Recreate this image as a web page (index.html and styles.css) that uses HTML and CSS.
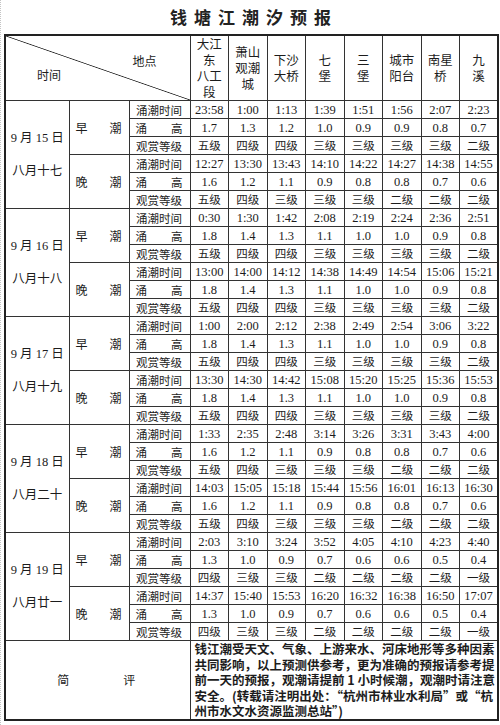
FILE: index.html
```html
<!DOCTYPE html>
<html lang="zh-CN">
<head>
<meta charset="utf-8">
<title>钱塘江潮汐预报</title>
<link rel="stylesheet" href="styles.css">
</head>
<body>
<div class="page">
<h1 class="title">钱塘江潮汐预报</h1>
<table class="tide">
<colgroup>
<col class="c-date"><col class="c-tide"><col class="c-item">
<col class="c-site" span="8">
</colgroup>
<tbody>
<tr class="head">
<td colspan="3" class="corner"><div class="corner-in"><span class="place">地点</span><span class="time">时间</span></div></td>
<td class="site">大江<br>东<br>八工<br>段</td>
<td class="site">萧山<br>观潮<br>城</td>
<td class="site">下沙<br>大桥</td>
<td class="site">七<br>堡</td>
<td class="site">三<br>堡</td>
<td class="site">城市<br>阳台</td>
<td class="site">南星<br>桥</td>
<td class="site">九<br>溪</td>
</tr>

<!-- 9月15日 -->
<tr>
<td rowspan="6" class="date"><div>9 月 15 日</div><div>八月十七</div></td>
<td rowspan="3" class="tname">早<span class="gap">潮</span></td>
<td class="item">涌潮时间</td>
<td>23:58</td><td>1:00</td><td>1:13</td><td>1:39</td><td>1:51</td><td>1:56</td><td>2:07</td><td>2:23</td>
</tr>
<tr><td class="item">涌<span class="gap">高</span></td>
<td>1.7</td><td>1.3</td><td>1.2</td><td>1.0</td><td>0.9</td><td>0.9</td><td>0.8</td><td>0.7</td></tr>
<tr class="grade"><td class="item">观赏等级</td>
<td>五级</td><td>四级</td><td>四级</td><td>三级</td><td>三级</td><td>三级</td><td>三级</td><td>二级</td></tr>
<tr>
<td rowspan="3" class="tname">晚<span class="gap">潮</span></td>
<td class="item">涌潮时间</td>
<td>12:27</td><td>13:30</td><td>13:43</td><td>14:10</td><td>14:22</td><td>14:27</td><td>14:38</td><td>14:55</td>
</tr>
<tr><td class="item">涌<span class="gap">高</span></td>
<td>1.6</td><td>1.2</td><td>1.1</td><td>0.9</td><td>0.8</td><td>0.8</td><td>0.7</td><td>0.6</td></tr>
<tr class="grade"><td class="item">观赏等级</td>
<td>五级</td><td>四级</td><td>三级</td><td>三级</td><td>三级</td><td>二级</td><td>二级</td><td>二级</td></tr>

<!-- 9月16日 -->
<tr>
<td rowspan="6" class="date"><div>9 月 16 日</div><div>八月十八</div></td>
<td rowspan="3" class="tname">早<span class="gap">潮</span></td>
<td class="item">涌潮时间</td>
<td>0:30</td><td>1:30</td><td>1:42</td><td>2:08</td><td>2:19</td><td>2:24</td><td>2:36</td><td>2:51</td>
</tr>
<tr><td class="item">涌<span class="gap">高</span></td>
<td>1.8</td><td>1.4</td><td>1.3</td><td>1.1</td><td>1.0</td><td>1.0</td><td>0.9</td><td>0.8</td></tr>
<tr class="grade"><td class="item">观赏等级</td>
<td>五级</td><td>四级</td><td>四级</td><td>三级</td><td>三级</td><td>三级</td><td>三级</td><td>二级</td></tr>
<tr>
<td rowspan="3" class="tname">晚<span class="gap">潮</span></td>
<td class="item">涌潮时间</td>
<td>13:00</td><td>14:00</td><td>14:12</td><td>14:38</td><td>14:49</td><td>14:54</td><td>15:06</td><td>15:21</td>
</tr>
<tr><td class="item">涌<span class="gap">高</span></td>
<td>1.8</td><td>1.4</td><td>1.3</td><td>1.1</td><td>1.0</td><td>1.0</td><td>0.9</td><td>0.8</td></tr>
<tr class="grade"><td class="item">观赏等级</td>
<td>五级</td><td>四级</td><td>四级</td><td>三级</td><td>三级</td><td>三级</td><td>三级</td><td>二级</td></tr>

<!-- 9月17日 -->
<tr>
<td rowspan="6" class="date"><div>9 月 17 日</div><div>八月十九</div></td>
<td rowspan="3" class="tname">早<span class="gap">潮</span></td>
<td class="item">涌潮时间</td>
<td>1:00</td><td>2:00</td><td>2:12</td><td>2:38</td><td>2:49</td><td>2:54</td><td>3:06</td><td>3:22</td>
</tr>
<tr><td class="item">涌<span class="gap">高</span></td>
<td>1.8</td><td>1.4</td><td>1.3</td><td>1.1</td><td>1.0</td><td>1.0</td><td>0.9</td><td>0.8</td></tr>
<tr class="grade"><td class="item">观赏等级</td>
<td>五级</td><td>四级</td><td>四级</td><td>三级</td><td>三级</td><td>三级</td><td>三级</td><td>二级</td></tr>
<tr>
<td rowspan="3" class="tname">晚<span class="gap">潮</span></td>
<td class="item">涌潮时间</td>
<td>13:30</td><td>14:30</td><td>14:42</td><td>15:08</td><td>15:20</td><td>15:25</td><td>15:36</td><td>15:53</td>
</tr>
<tr><td class="item">涌<span class="gap">高</span></td>
<td>1.8</td><td>1.4</td><td>1.3</td><td>1.1</td><td>1.0</td><td>1.0</td><td>0.9</td><td>0.8</td></tr>
<tr class="grade"><td class="item">观赏等级</td>
<td>五级</td><td>四级</td><td>四级</td><td>三级</td><td>三级</td><td>三级</td><td>三级</td><td>二级</td></tr>

<!-- 9月18日 -->
<tr>
<td rowspan="6" class="date"><div>9 月 18 日</div><div>八月二十</div></td>
<td rowspan="3" class="tname">早<span class="gap">潮</span></td>
<td class="item">涌潮时间</td>
<td>1:33</td><td>2:35</td><td>2:48</td><td>3:14</td><td>3:26</td><td>3:31</td><td>3:43</td><td>4:00</td>
</tr>
<tr><td class="item">涌<span class="gap">高</span></td>
<td>1.6</td><td>1.2</td><td>1.1</td><td>0.9</td><td>0.8</td><td>0.8</td><td>0.7</td><td>0.6</td></tr>
<tr class="grade"><td class="item">观赏等级</td>
<td>五级</td><td>四级</td><td>三级</td><td>三级</td><td>三级</td><td>二级</td><td>二级</td><td>二级</td></tr>
<tr>
<td rowspan="3" class="tname">晚<span class="gap">潮</span></td>
<td class="item">涌潮时间</td>
<td>14:03</td><td>15:05</td><td>15:18</td><td>15:44</td><td>15:56</td><td>16:01</td><td>16:13</td><td>16:30</td>
</tr>
<tr><td class="item">涌<span class="gap">高</span></td>
<td>1.6</td><td>1.2</td><td>1.1</td><td>0.9</td><td>0.8</td><td>0.8</td><td>0.7</td><td>0.6</td></tr>
<tr class="grade"><td class="item">观赏等级</td>
<td>五级</td><td>四级</td><td>三级</td><td>三级</td><td>三级</td><td>二级</td><td>二级</td><td>二级</td></tr>

<!-- 9月19日 -->
<tr>
<td rowspan="6" class="date"><div>9 月 19 日</div><div>八月廿一</div></td>
<td rowspan="3" class="tname">早<span class="gap">潮</span></td>
<td class="item">涌潮时间</td>
<td>2:03</td><td>3:10</td><td>3:24</td><td>3:52</td><td>4:05</td><td>4:10</td><td>4:23</td><td>4:40</td>
</tr>
<tr><td class="item">涌<span class="gap">高</span></td>
<td>1.3</td><td>1.0</td><td>0.9</td><td>0.7</td><td>0.6</td><td>0.6</td><td>0.5</td><td>0.4</td></tr>
<tr class="grade"><td class="item">观赏等级</td>
<td>四级</td><td>三级</td><td>三级</td><td>二级</td><td>二级</td><td>二级</td><td>二级</td><td>一级</td></tr>
<tr>
<td rowspan="3" class="tname">晚<span class="gap">潮</span></td>
<td class="item">涌潮时间</td>
<td>14:37</td><td>15:40</td><td>15:53</td><td>16:20</td><td>16:32</td><td>16:38</td><td>16:50</td><td>17:07</td>
</tr>
<tr><td class="item">涌<span class="gap">高</span></td>
<td>1.3</td><td>1.0</td><td>0.9</td><td>0.7</td><td>0.6</td><td>0.6</td><td>0.5</td><td>0.4</td></tr>
<tr class="grade"><td class="item">观赏等级</td>
<td>四级</td><td>三级</td><td>三级</td><td>二级</td><td>二级</td><td>二级</td><td>二级</td><td>一级</td></tr>

<tr class="note-row">
<td colspan="3" class="review">简<span class="gap">评</span></td>
<td colspan="8" class="note">钱江潮受天文、气象、上游来水、河床地形等多种因素<br>共同影响，以上预测供参考，更为准确的预报请参考提<br>前一天的预报，观潮请提前 1 小时候潮，观潮时请注意<br>安全。(转载请注明出处：“杭州市林业水利局”或“杭<br>州市水文水资源监测总站”)</td>
</tr>
</tbody>
</table>
</div>
</body>
</html>
```

FILE: styles.css
```css
html, body {
  margin: 0;
  background: #fff;
}

body {
  font-family: "Liberation Serif", "Noto Sans CJK SC", serif;
  color: #1c1c1c;
}

.page {
  width: 500px;
  height: 725px;
  box-sizing: border-box;
  border-left: 1px dotted #c4c4c4;
  padding-left: 3px;
  overflow: hidden;
}

.title {
  margin: 0;
  width: 493px;
  height: 34px;
  box-sizing: border-box;
  padding-left: 7px;
  line-height: 33px;
  text-align: center;
  font-family: "Noto Sans CJK SC", sans-serif;
  font-size: 17px;
  font-weight: 700;
  letter-spacing: 7px;
  color: #222;
}

.tide {
  width: 493px;
  border-collapse: collapse;
  table-layout: fixed;
  border: 2px solid #222;
}

.c-date { width: 64px; }
.c-tide { width: 60px; }
.c-item { width: 61px; }
.c-site { width: 38.5px; }

.tide td {
  border: 1px solid #333;
  padding: 0;
  height: 17px;
  text-align: center;
  vertical-align: middle;
  font-size: 12.5px;
  line-height: 16px;
  white-space: nowrap;
  overflow: hidden;
}

.tide tr.grade td {
  font-size: 11.5px;
}

.tide tr.head td {
  height: 62px;
}

.site {
  font-family: "Noto Sans CJK SC", sans-serif;
  font-size: 12px;
  line-height: 15px;
}

.corner {
  background: linear-gradient(to top right, transparent calc(50% - 0.8px), #2a2a2a 50%, transparent calc(50% + 0.8px));
}

.corner-in {
  display: flex;
  flex-direction: column;
  height: 62px;
  box-sizing: border-box;
  padding-top: 17px;
  font-family: "Noto Sans CJK SC", sans-serif;
  font-size: 12px;
  line-height: 14px;
}

.place {
  align-self: flex-end;
  margin-right: 33px;
}

.time {
  align-self: flex-start;
  margin-left: 31px;
}

.date {
  font-size: 12.5px;
}

.date div {
  line-height: 33px;
}

.gap {
  display: inline-block;
}

.tide td.tname {
  font-family: "Noto Sans CJK SC", sans-serif;
  font-size: 12px;
  padding-right: 1px;
}

.tname .gap {
  margin-left: 22px;
}

.tide td.item {
  font-family: "Noto Sans CJK SC", sans-serif;
  font-size: 11.5px;
  padding-right: 1px;
}

.item .gap {
  margin-left: 24px;
}

.note-row td {
  height: 74px;
}

.tide td.review {
  font-family: "Noto Sans CJK SC", sans-serif;
  font-size: 12px;
  padding-right: 3px;
}

.review .gap {
  margin-left: 54px;
}

.tide td.note {
  text-align: left;
  font-family: "Noto Sans CJK SC", sans-serif;
  font-size: 12.5px;
  font-weight: 700;
  line-height: 15.6px;
  padding: 0 2px 0 4px;
  vertical-align: top;
}
```
